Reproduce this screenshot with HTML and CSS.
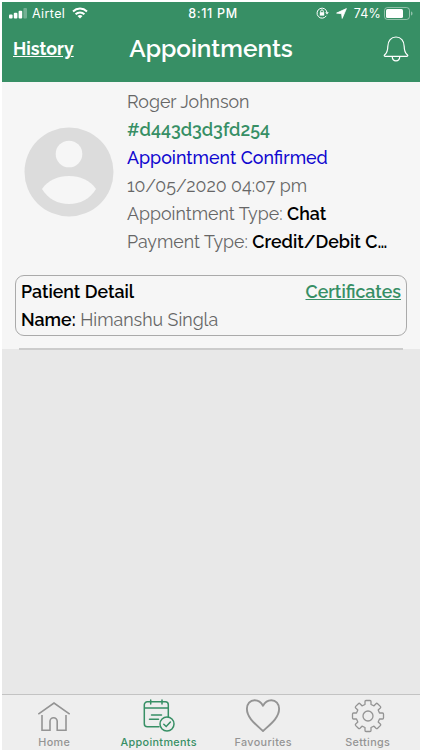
FILE: index.html
```html
<!DOCTYPE html>
<html lang="en">
<head>
    <meta charset="UTF-8">
    <meta name="viewport" content="width=device-width, initial-scale=1.0">
    <title>Appointments</title>
    <link rel="stylesheet" href="styles.css">
</head>
<body>
    <div class="screen">
        <header class="header">
            <div class="status-bar">
                <div class="status-left">
                    <svg width="19" height="11" viewBox="0 0 19 11" fill="#fff">
                        <rect x="0" y="6.5" width="3.6" height="4" rx="1"/>
                        <rect x="4.8" y="4.8" width="3.6" height="5.7" rx="1"/>
                        <rect x="9.6" y="2.8" width="3.6" height="7.7" rx="1"/>
                        <rect x="14.4" y="0" width="3.6" height="10.5" rx="1" opacity="0.3"/>
                    </svg>
                    <span class="carrier">Airtel</span>
                    <svg width="16" height="12" viewBox="0 0 16 12" fill="none" stroke="#fff" stroke-width="2">
                        <path d="M1 4.4a10.2 10.2 0 0 1 14 0"/>
                        <path d="M3.6 7.2a6.3 6.3 0 0 1 8.8 0"/>
                        <path d="M8 11.6 5.5 9.1a3.6 3.6 0 0 1 5 0z" fill="#fff" stroke="none"/>
                    </svg>
                </div>
                <span class="time">8:11 PM</span>
                <div class="status-right">
                    <svg width="13" height="12" viewBox="0 0 13 12" fill="none" stroke="#fff">
                        <path d="M10.3 8.8A5 5 0 1 1 11 5.5"/>
                        <path d="M9.2 5.2h3.6L11 7.6z" fill="#fff" stroke="none"/>
                        <rect x="3.8" y="5.2" width="4.4" height="3.4" fill="#fff" stroke="none"/>
                        <path d="M4.7 5.4V4.2a1.3 1.3 0 0 1 2.6 0v1.2"/>
                    </svg>
                    <svg class="location" width="11" height="11" viewBox="0 0 11 11" fill="#fff" stroke="#fff" stroke-width="0.8" stroke-linejoin="round">
                        <path d="M10.4.6 6.2 10.4 5.6 5.7.6 5.1z"/>
                    </svg>
                    <span class="percent">74%</span>
                    <svg width="30" height="13" viewBox="0 0 30 13">
                        <rect x="0.5" y="0.5" width="25" height="12" rx="3" fill="none" stroke="#fff" opacity="0.45"/>
                        <rect x="2" y="2" width="17" height="9" rx="1.5" fill="#fff"/>
                        <path d="M27 4.5c2 .6 2 3.4 0 4z" fill="#fff" opacity="0.45"/>
                    </svg>
                </div>
            </div>
            <div class="nav-bar">
                <a class="history">History</a>
                <h1 class="title">Appointments</h1>
                <svg class="bell" width="26" height="26" viewBox="0 0 26 26" fill="none" stroke="#fff" stroke-width="1.2" stroke-linejoin="round">
                    <path d="M2 20.3c-1 0-1-.9-.3-1.5C4.2 16.6 4.8 14 4.8 10.500 4.800 4.700 8.200 1 13 1s8.200 3.700 8.200 9.500c0 3.500.6 6.100 3.100 8.300.7.6.7 1.500-.3 1.500z"/>
                    <path d="M9.2 20.4c.3 6 7.300 6 7.600 0"/>
                </svg>
            </div>
        </header>

        <main class="content">
            <div class="card">
                <div class="summary">
                    <svg class="avatar" width="90" height="90" viewBox="0 0 90 90">
                        <circle cx="45" cy="45" r="44.5" fill="#dcdcdc"/>
                        <circle cx="45" cy="27" r="13.3" fill="#f6f6f6"/>
                        <path d="M18 62C24 53 34 49 45 49s21 4 27 13c-6 10-16 15-27 15s-21-5-27-15z" fill="#f6f6f6"/>
                    </svg>
                    <div class="info">
                        <p>Roger Johnson</p>
                        <p class="code">#d443d3d3fd254</p>
                        <p class="state">Appointment Confirmed</p>
                        <p>10/05/2020 04:07 pm</p>
                        <p>Appointment Type: <b>Chat</b></p>
                        <p>Payment Type: <b>Credit/Debit C…</b></p>
                    </div>
                </div>
                <div class="patient">
                    <div class="patient-row">
                        <b>Patient Detail</b>
                        <a class="certificates">Certificates</a>
                    </div>
                    <div class="patient-row">
                        <span><b>Name:</b> Himanshu Singla</span>
                    </div>
                </div>
                <div class="divider"></div>
            </div>
        </main>

        <nav class="tabs">
            <a class="tab">
                <svg width="34" height="34" viewBox="0 0 34 34" fill="none" stroke="currentColor" stroke-width="1.6">
                    <path d="M1.3 15.2 17 4l15.7 11.2"/>
                    <path d="M5 16v15.300h8V22.300a3.600 3.600 0 0 1 7.200 0v9h8.800V16"/>
                </svg>
                <span>Home</span>
            </a>
            <a class="tab active">
                <svg width="34" height="34" viewBox="0 0 34 34" fill="none" stroke="currentColor" stroke-width="1.5" stroke-linecap="round">
                    <path d="M17 27.700H5.300a3 3 0 0 1-3-3V5.800a3 3 0 0 1 3-3h18a3 3 0 0 1 3 3v12.400M2.300 9h24M8.700.9v4M20 .9v4M9.500 16h10M7.500 20.300h9"/>
                    <circle cx="25" cy="25" r="7"/>
                    <path d="m21.800 25.200 2.400 2.300 4.200-4.500"/>
                </svg>
                <span>Appointments</span>
            </a>
            <a class="tab">
                <svg width="36" height="34" viewBox="0 0 36 34" fill="none" stroke="currentColor" stroke-width="1.9" stroke-linejoin="round">
                    <path d="M18 32C11 25.500 1.900 19 1.900 9.800 1.900 4.800 5.200 1.200 9.600 1.200c3.800 0 6.700 2.200 8.400 5.500 1.700-3.300 4.600-5.500 8.400-5.500 4.400 0 7.700 3.600 7.700 8.600C34.100 19 25 25.500 18 32z"/>
                </svg>
                <span>Favourites</span>
            </a>
            <a class="tab">
                <svg width="34" height="34" viewBox="0 0 34 34" fill="none" stroke="currentColor" stroke-width="1.3" stroke-linejoin="round">
                    <path d="M14 5.500V2.500Q14 1.500 15 1.500H19Q20 1.500 20 2.500V5.500L23 6.800 25 4.700Q25.800 3.900 26.600 4.700L29.300 7.400Q30.100 8.200 29.300 9L27.200 11 28.500 14H31.500Q32.500 14 32.500 15V19Q32.500 20 31.500 20H28.500L27.200 23 29.300 25Q30.100 25.800 29.300 26.600L26.600 29.300Q25.800 30.100 25 29.300L23 27.200 20 28.500V31.500Q20 32.500 19 32.500H15Q14 32.500 14 31.500V28.500L11 27.200 9 29.300Q8.200 30.100 7.400 29.300L4.700 26.600Q3.900 25.800 4.700 25L6.800 23 5.500 20H2.500Q1.500 20 1.500 19V15Q1.500 14 2.500 14H5.500L6.800 11 4.700 9Q3.900 8.200 4.700 7.400L7.400 4.700Q8.200 3.900 9 4.700L11 6.800z"/>
                    <circle cx="17" cy="17" r="5"/>
                </svg>
                <span>Settings</span>
            </a>
        </nav>
    </div>
</body>
</html>
```
FILE: styles.css
```css
* {
    box-sizing: border-box;
}
body {
    margin: 0;
    background: white;
    font-family: Raleway, Lato, sans-serif;
}
h1, p {
    margin: 0;
}
svg {
    display: block;
    flex-shrink: 0;
}
.screen {
    display: flex;
    flex-direction: column;
    height: 750px;
    padding: 2px 2px 0;
}
.header {
    height: 80px;
    background: #378f65;
    color: white;
}
.status-bar {
    display: grid;
    grid-template-columns: 1fr auto 1fr;
    align-items: center;
    height: 22px;
    padding: 0 6px 0 7px;
    font-family: Inter, sans-serif;
    font-size: 12.5px;
}
.status-left, .status-right {
    display: flex;
    align-items: center;
}
.carrier {
    margin: 0 7px 0 4px;
    letter-spacing: 0.4px;
}
.time {
    padding-left: 3px;
    font-weight: 500;
    letter-spacing: 0.7px;
}
.status-right {
    justify-content: flex-end;
}
.location {
    margin: 0 7px;
}
.percent {
    margin-right: 3px;
    letter-spacing: 0.2px;
}
.nav-bar {
    display: grid;
    grid-template-columns: 1fr auto 1fr;
    align-items: center;
    height: 49px;
    padding: 0 11px;
}
.history {
    font-size: 17.8px;
    font-weight: bold;
    text-decoration: underline;
}
.title {
    font-size: 24.4px;
    font-weight: 600;
}
.bell {
    justify-self: end;
}
.content {
    flex: 1;
    background: #e8e8e8;
}
.card {
    height: 267px;
    padding: 6px 14px 0;
    background: #f6f6f6;
    color: #666;
    font-size: 17.8px;
}
.summary {
    display: flex;
    gap: 13px;
    padding-left: 8px;
}
.avatar {
    margin-top: 39px;
}
.info p {
    height: 28px;
    line-height: 28px;
    white-space: nowrap;
}
.card b {
    color: black;
    font-weight: 600;
}
.info .code {
    color: #378f65;
    font-weight: 600;
}
.info .state {
    color: #1008d0;
    font-weight: 500;
}
.patient {
    height: 61px;
    margin: 19px -1px 0;
    padding: 2px 5px;
    border: 1px solid #aaa;
    border-radius: 9px;
}
.patient-row {
    display: flex;
    justify-content: space-between;
    height: 28px;
    line-height: 28px;
}
.certificates {
    color: #378f65;
    font-weight: 600;
    text-decoration: underline;
}
.divider {
    height: 2px;
    margin: 12px 3px 0;
    background: #ccc;
}
.tabs {
    display: flex;
    height: 56px;
    padding-top: 4px;
    border-top: 1px solid #c3c3c3;
    background: #eee;
}
.tab {
    display: flex;
    flex: 1;
    flex-direction: column;
    align-items: center;
    gap: 1px;
    color: #949494;
    font-family: Inter, sans-serif;
    font-size: 10.8px;
    font-weight: 500;
    line-height: 17px;
    letter-spacing: 0.35px;
}
.tab.active {
    color: #378f65;
}
```
